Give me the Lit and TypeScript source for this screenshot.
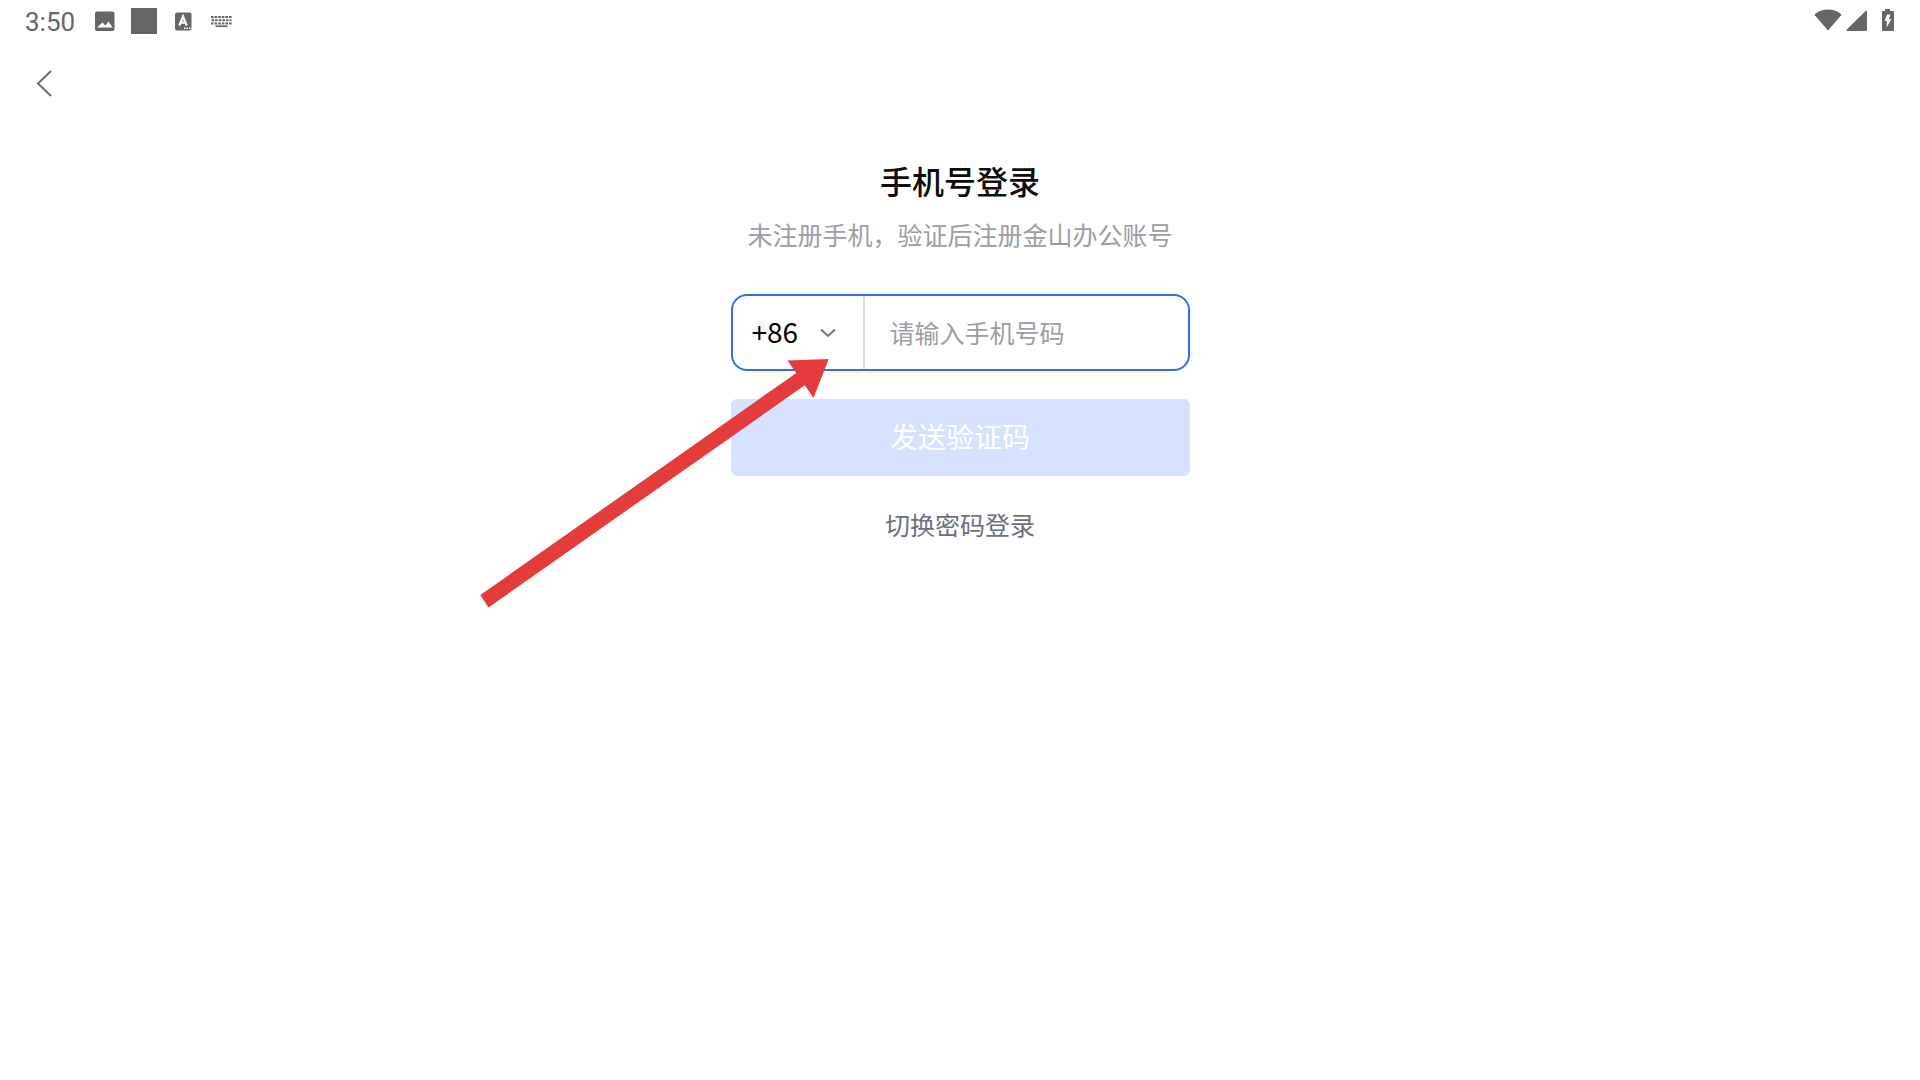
import { LitElement, html, css } from "lit";
import { customElement, state } from "lit/decorators.js";

@customElement("status-bar")
class StatusBar extends LitElement {
  static styles = css`
    :host {
      display: block;
    }
    .bar {
      display: flex;
      align-items: center;
      justify-content: space-between;
      height: 42px;
      padding: 0 24px 0 25px;
      color: #666666;
    }
    .group {
      display: flex;
      align-items: center;
    }
    .notices {
      gap: 14px;
    }
    .time {
      margin-right: 4px;
      padding-top: 2px;
      font: 26px/40px Roboto, "Noto Sans", sans-serif;
    }
    .system {
      gap: 4px;
    }
    svg {
      display: block;
      fill: currentColor;
    }
  `;

  render() {
    return html`
      <div class="bar">
        <div class="group notices">
          <time class="time">3:50</time>
          <svg width="24" height="26" viewBox="0 0 24 26" aria-hidden="true">
            <path fill-rule="evenodd" d="M4 3.500h15.500a2 2 0 0 1 2 2v15.500a2 2 0 0 1-2 2H4a2 2 0 0 1-2-2V5.500a2 2 0 0 1 2-2zM4 19.500h15.500l-4-6-3 4-3-3z" />
          </svg>
          <svg width="26" height="26" viewBox="0 0 26 26" aria-hidden="true">
            <rect width="26" height="26" />
          </svg>
          <svg width="24" height="26" viewBox="-2 0 24 26" aria-hidden="true">
            <rect x="2" y="4.500" width="16.500" height="18" rx="2" />
            <path d="M6.300 17.500 10 8.500l3.700 9M7.800 14.700h4.400" fill="none" stroke="#fff" stroke-width="2.200" />
            <path d="M11 19.500h1.500V21H11zM13.500 19.500H15V21h-1.500zM16 19.500h1.500V21H16z" fill="#fff" />
          </svg>
          <svg width="24" height="26" viewBox="-1 0 24 26" aria-hidden="true">
            <g fill="none" stroke="currentColor" stroke-width="2">
              <path d="M1 9h21" stroke-dasharray="2.600 1" />
              <path d="M1.500 12.200h20" stroke-dasharray="2.600 1" />
              <path d="M1 15.400h21" stroke-dasharray="2.600 1" />
              <path d="M5.500 18.200h12" stroke-width="1.700" />
            </g>
          </svg>
        </div>
        <div class="group system">
          <svg width="28" height="26" viewBox="0 0 28 26" aria-hidden="true">
            <path d="M14 22.500.8 7.300C.5 6.800.6 6.300 1 5.900 8.500.1 19.500.1 27 5.900c.4.400.5.900.2 1.400z" />
          </svg>
          <svg width="22" height="26" viewBox="0 0 22 26" aria-hidden="true">
            <path d="M1.500 23C.5 23 .3 22 1 21.200L19.400 3.200c.7-.7 1.600-.4 1.600.6V22a1 1 0 0 1-1 1z" />
          </svg>
          <svg width="24" height="26" viewBox="0 0 24 26" aria-hidden="true">
            <path fill-rule="evenodd" d="M13 1h5v2h3a1 1 0 0 1 1 1v18a1 1 0 0 1-1 1H11a1 1 0 0 1-1-1V4a1 1 0 0 1 1-1h2zM15 6.500h3.500L17 11h2.500L14.500 19.500l.5-6.500h-2.500z" />
          </svg>
        </div>
      </div>
    `;
  }
}

@customElement("login-form")
class LoginForm extends LitElement {
  @state() private phone = "";

  static styles = css`
    :host {
      display: block;
    }
    form {
      position: relative;
      display: flex;
      flex-direction: column;
      gap: 28px;
    }
    .field {
      display: flex;
      box-sizing: border-box;
      height: 77px;
      border: 2px solid #356de0;
      border-radius: 16px;
      overflow: hidden;
    }
    .code {
      display: grid;
      flex: none;
      width: 130px;
      border-right: 2px solid #dedee2;
    }
    .code select,
    .code svg {
      grid-area: 1 / 1;
    }
    .code svg {
      align-self: center;
      justify-self: end;
      margin-right: 25px;
      pointer-events: none;
    }
    select,
    input,
    button {
      margin: 0;
      border: 0;
      outline: 0;
      background: none;
      font-family: inherit;
    }
    select {
      appearance: none;
      width: 100%;
      padding: 0 0 4px 19px;
      color: #000;
      font-size: 28px;
    }
    input {
      flex: 1;
      min-width: 0;
      padding: 0 25px 2px;
      color: #000;
      font-size: 25px;
    }
    input::placeholder {
      color: #9c9ea3;
      opacity: 1;
    }
    .send {
      height: 77px;
      padding: 0 0 4px;
      border-radius: 6px;
      background: #d6e2ff;
      color: #fff;
      font-size: 28px;
    }
    .switch {
      align-self: center;
      margin-top: 4px;
      color: #6c717d;
      font-size: 25px;
      line-height: 32px;
      text-decoration: none;
    }
    .pointer {
      position: absolute;
      left: -270px;
      top: 46px;
      fill: #e43c3c;
      pointer-events: none;
    }
  `;

  private onInput(event: Event) {
    this.phone = (event.target as HTMLInputElement).value;
  }

  render() {
    return html`
      <form @submit=${(event: Event) => event.preventDefault()}>
        <div class="field">
          <div class="code">
            <select aria-label="+86">
              <option>+86</option>
            </select>
            <svg width="20" height="16" viewBox="0 0 20 16" aria-hidden="true">
              <path d="m3 4.500 7 6.500 7-6.500" fill="none" stroke="#777980" stroke-width="2" />
            </svg>
          </div>
          <input type="tel" aria-label="请输入手机号码" placeholder="请输入手机号码" .value=${this.phone} @input=${this.onInput} />
        </div>
        <button class="send" type="submit" ?disabled=${!this.phone}>发送验证码</button>
        <a class="switch" href="#password">切换密码登录</a>
        <svg class="pointer" width="400" height="280" viewBox="0 0 400 280" aria-hidden="true">
          <path d="M19.300 255 335.300 33 326.500 20.500 367.700 19 352.500 58 343.800 45.300 27.500 267.500z" />
        </svg>
      </form>
    `;
  }
}

@customElement("app-root")
class AppRoot extends LitElement {
  static styles = css`
    :host {
      display: block;
      min-height: 100vh;
      background: #fff;
      font-family: "Noto Sans CJK SC", "Noto Sans", sans-serif;
    }
    nav {
      display: flex;
      align-items: center;
      height: 84px;
      padding: 0 20px;
    }
    .back {
      display: grid;
      place-items: center;
      width: 48px;
      height: 48px;
      padding: 0;
      border: 0;
      background: none;
    }
    main {
      box-sizing: border-box;
      width: 100%;
      max-width: 459px;
      margin: 0 auto;
      padding: 34px 0;
    }
    h1,
    p {
      margin: 0;
      text-align: center;
      white-space: nowrap;
    }
    h1 {
      color: #0d0d0d;
      font-size: 32px;
      font-weight: 500;
      line-height: 40px;
    }
    p {
      margin: 18px 0 44px;
      color: #9c9ea3;
      font-size: 25px;
      line-height: 32px;
    }
  `;

  render() {
    return html`
      <status-bar></status-bar>
      <nav>
        <button class="back" type="button" aria-label="返回">
          <svg width="48" height="48" viewBox="0 0 48 48" aria-hidden="true">
            <path d="M31 11 18 23.500 31 36" fill="none" stroke="#6c6c7a" stroke-width="2" />
          </svg>
        </button>
      </nav>
      <main>
        <h1>手机号登录</h1>
        <p>未注册手机，验证后注册金山办公账号</p>
        <login-form></login-form>
      </main>
    `;
  }
}
